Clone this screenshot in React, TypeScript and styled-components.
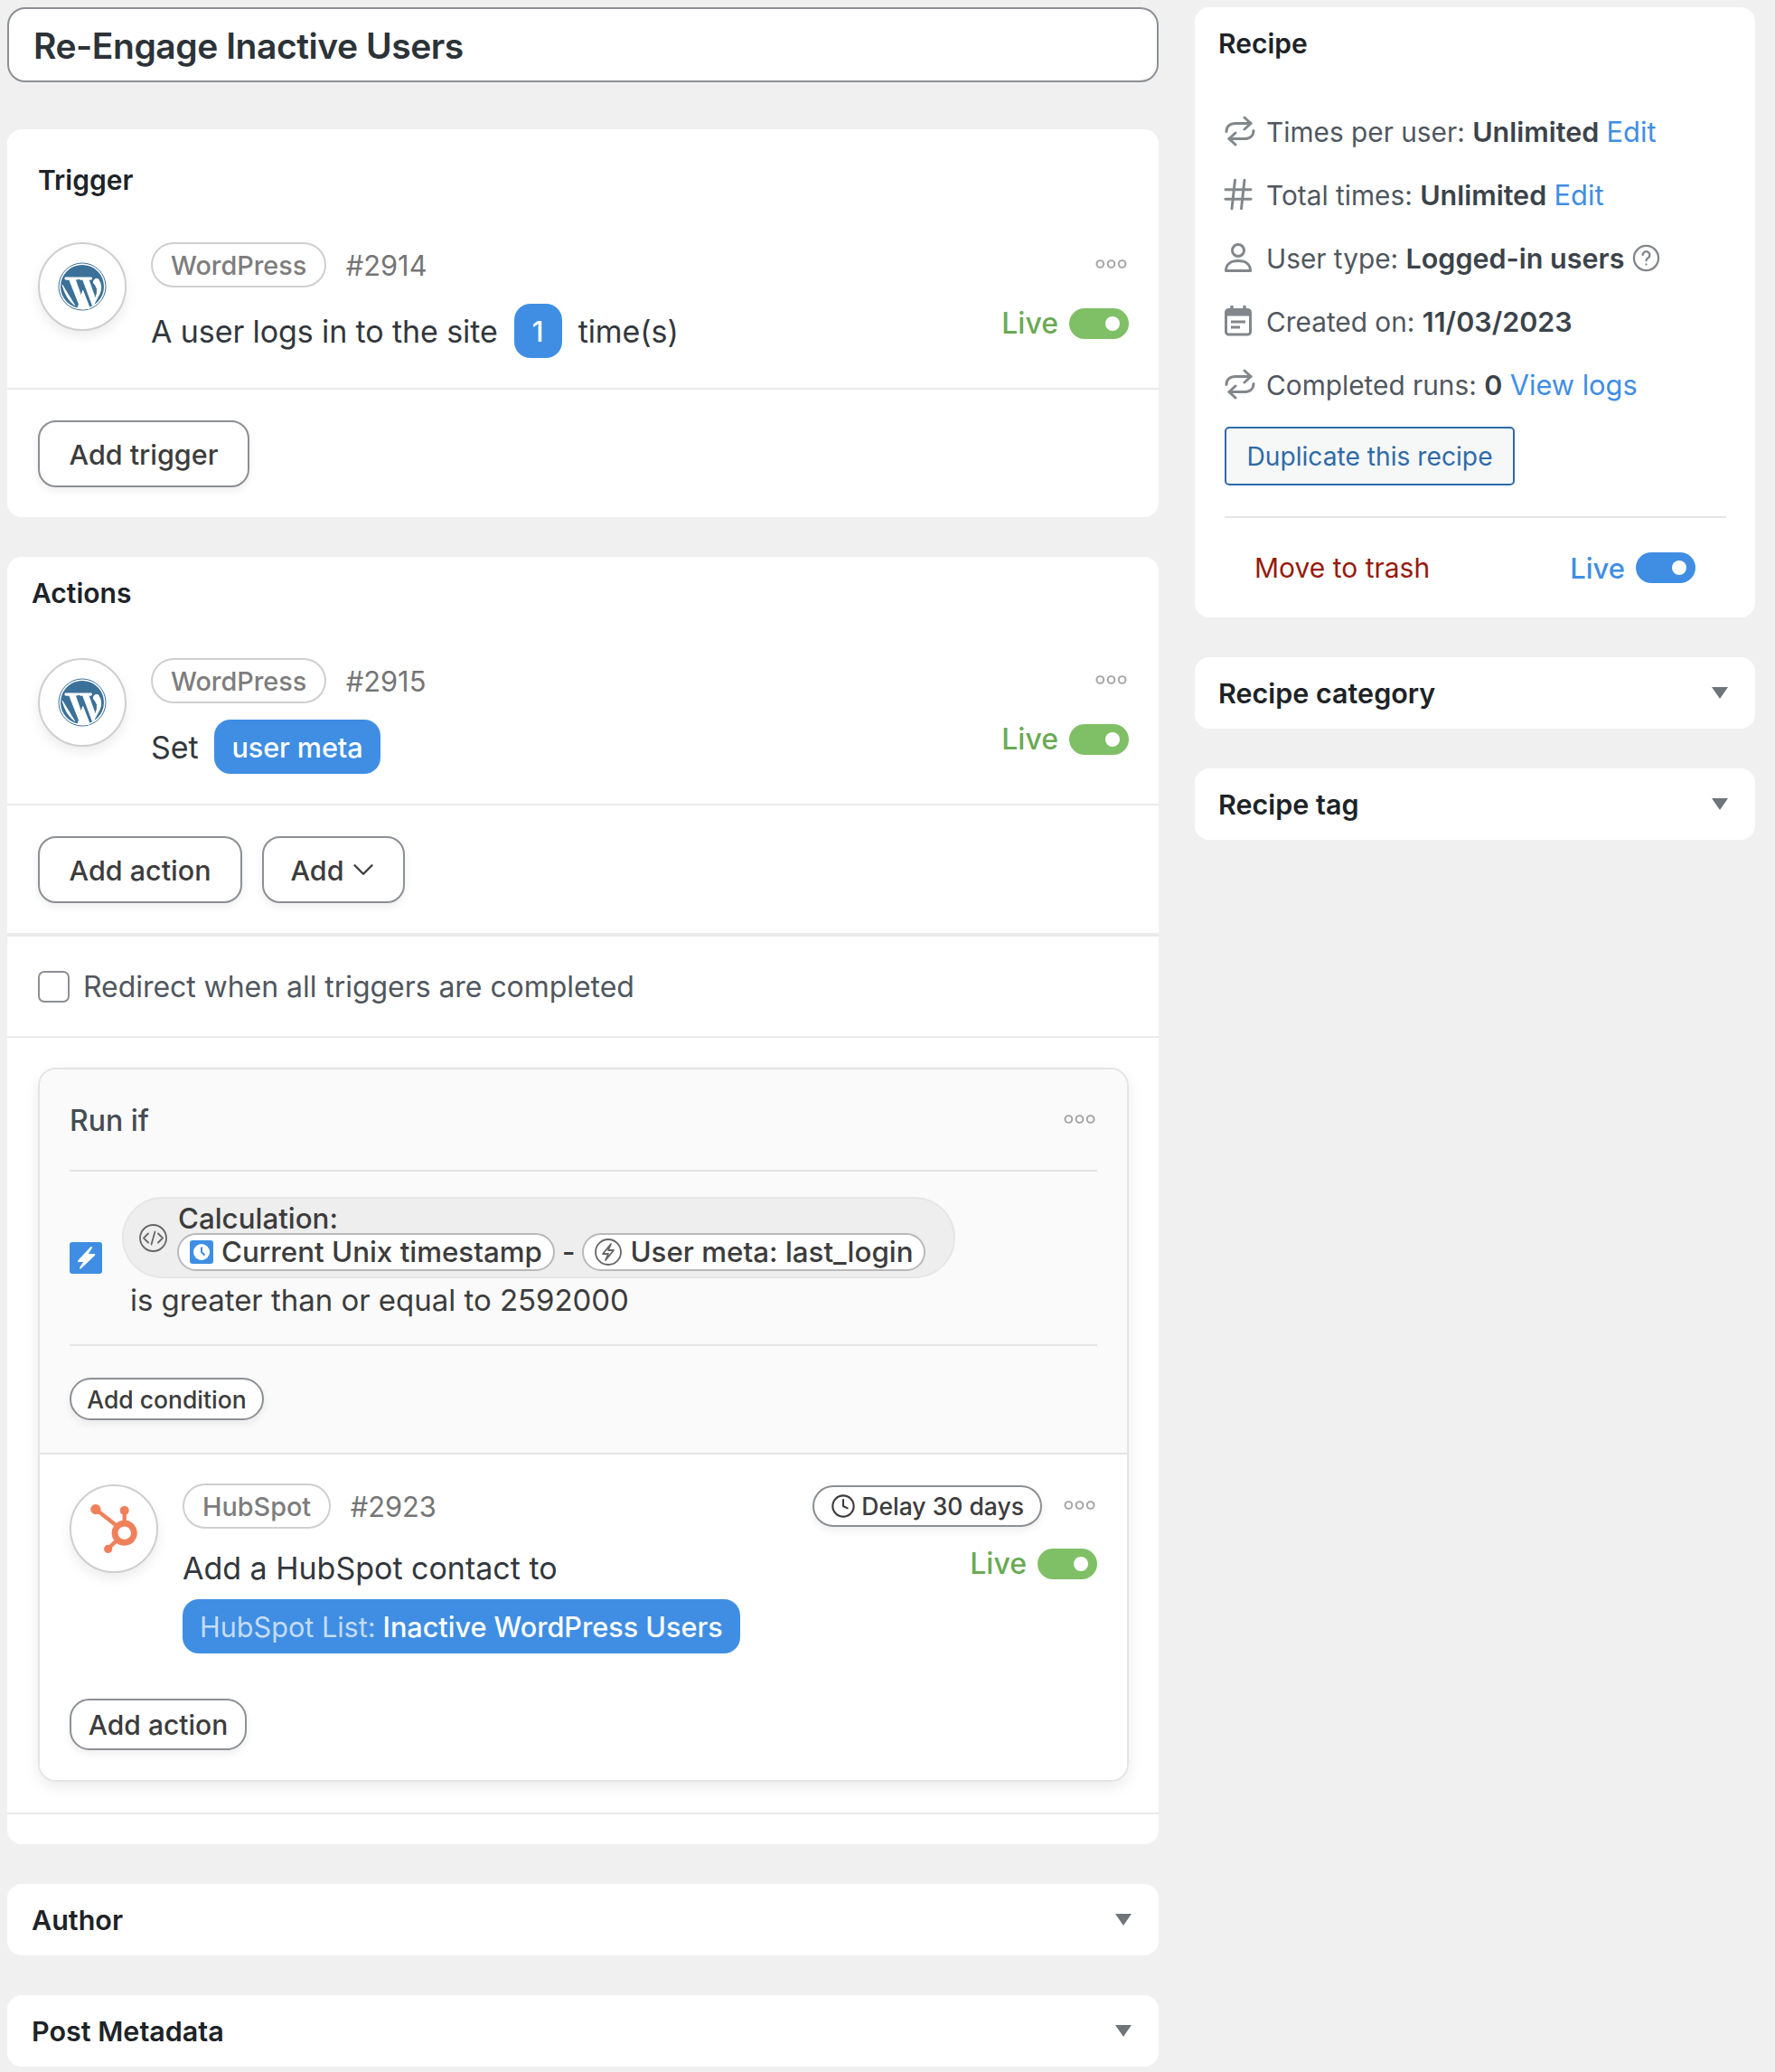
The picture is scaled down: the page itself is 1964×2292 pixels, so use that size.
import React from "react";
import styled, { createGlobalStyle } from "styled-components";
import { SiHubspot } from "react-icons/si";
import { Clock, Hash, ChevronDown } from "lucide-react";

const Global = createGlobalStyle`
  html, body { margin: 0; padding: 0; background: #f0f0f0; }
  body { font-family: Inter, "Noto Sans", sans-serif; color: #3c434a; }
  * { box-sizing: border-box; }
`;

const Page = styled.div`
  display: grid;
  grid-template-columns: 1274px 620px;
  column-gap: 40px;
  align-items: start;
  padding: 8px;
  width: 1964px;
  min-height: 2292px;
`;
const Column = styled.div`
  display: flex;
  flex-direction: column;
`;
const TitleBox = styled.div`
  height: 83px;
  margin-bottom: 52px;
  display: flex;
  align-items: center;
  padding: 2px 27px 0;
  background: #fff;
  border: 2px solid #8c8f94;
  border-radius: 20px;
  font-size: 39px;
  font-weight: 600;
  letter-spacing: -0.45px;
  color: #2c3338;
`;
const Card = styled.section<{ $gap?: number }>`
  background: #fff;
  border-radius: 16px;
  margin-bottom: ${(p) => p.$gap ?? 44}px;
`;
const CardTitle = styled.h2<{ $top: number; $left: number; $bottom: number }>`
  margin: 0;
  padding: ${(p) => p.$top}px 0 ${(p) => p.$bottom}px ${(p) => p.$left}px;
  font-size: 30px;
  line-height: 36px;
  font-weight: 600;
  color: #1d2327;
`;
const Item = styled.div<{ $pad?: string }>`
  display: flex;
  gap: 27px;
  padding: ${(p) => p.$pad ?? "0 33px 33px 34px"};
`;
const IconCircle = styled.div`
  flex: none;
  width: 98px;
  height: 98px;
  border-radius: 50%;
  background: #fff;
  border: 2px solid #cfcfcf;
  box-shadow: 0 6px 14px rgba(0, 0, 0, 0.08);
  display: flex;
  align-items: center;
  justify-content: center;
`;
const ItemMain = styled.div`
  flex: 1;
  min-width: 0;
`;
const ItemTop = styled.div`
  display: flex;
  align-items: center;
  height: 50px;
  margin-bottom: 18px;
`;
const Integration = styled.span`
  display: inline-flex;
  align-items: center;
  height: 50px;
  padding: 0 20px;
  border: 2px solid #cfcfcf;
  border-radius: 25px;
  font-size: 28.8px;
  font-weight: 500;
  color: #7d7d7d;
`;
const ItemId = styled.span`
  margin-left: 21.5px;
  font-size: 30.8px;
  color: #757575;
`;
const Spacer = styled.div`
  flex: 1;
`;
const Dots = styled.svg`
  flex: none;
  width: 35px;
  height: 12px;
  margin: -3px 2px 0 0;
`;
const ItemBottom = styled.div`
  display: flex;
  justify-content: space-between;
  align-items: flex-start;
`;
const Sentence = styled.div`
  display: flex;
  align-items: center;
  gap: 18px;
  min-height: 60px;
  font-size: 34px;
  letter-spacing: -0.1px;
  color: #32373c;
`;
const Token = styled.span`
  display: inline-flex;
  align-items: center;
  justify-content: center;
  min-width: 53px;
  height: 60px;
  padding: 0 19px;
  border-radius: 18px;
  background: #3f8ee3;
  color: #fff;
  font-size: 30.6px;
  font-weight: 500;
`;
const TokenLabel = styled.span`
  color: #c4dcf7;
  margin-right: 8px;
  font-weight: 400;
`;
const LiveWrap = styled.div<{ $top?: number }>`
  display: flex;
  align-items: center;
  gap: 12px;
  margin-top: ${(p) => p.$top ?? 2}px;
`;
const LiveText = styled.span<{ $color: string; $size: number }>`
  font-size: ${(p) => p.$size}px;
  font-weight: 500;
  color: ${(p) => p.$color};
`;
const Toggle = styled.span<{ $color: string }>`
  width: 66px;
  height: 34px;
  border-radius: 17px;
  background: ${(p) => p.$color};
  display: flex;
  align-items: center;
  justify-content: flex-end;
  padding-right: 10px;
  &::after {
    content: "";
    width: 16px;
    height: 16px;
    border-radius: 50%;
    background: #fff;
  }
`;
const Footer = styled.div`
  display: flex;
  gap: 22px;
  align-items: flex-start;
  padding: 34px 34px 33px;
  border-top: 2px solid #eaeaea;
`;
const OutlineButton = styled.button<{ $h: number; $w: number; $size: number; $r: number }>`
  display: inline-flex;
  align-items: center;
  justify-content: center;
  gap: 6px;
  width: ${(p) => p.$w}px;
  height: ${(p) => p.$h}px;
  padding: 0;
  background: #fff;
  border: 2px solid #8c8f94;
  border-radius: ${(p) => p.$r}px;
  font-family: inherit;
  font-size: ${(p) => p.$size}px;
  font-weight: 500;
  color: #3c3c3c;
  box-shadow: 0 4px 10px rgba(0, 0, 0, 0.07);
`;
const Chevron = styled(ChevronDown)`
  margin: 0 -4px;
`;
const RedirectRow = styled.label`
  display: flex;
  align-items: center;
  gap: 15px;
  height: 116px;
  padding: 0 34px;
  border-top: 4px solid #eaeaea;
  border-bottom: 2px solid #eaeaea;
  font-size: 32px;
  letter-spacing: -0.05px;
  color: #50575e;
`;
const CheckBox = styled.span`
  width: 35px;
  height: 35px;
  background: #fff;
  border: 2px solid #8c8f94;
  border-radius: 7px;
`;
const RunWrap = styled.div`
  padding: 33px 33px 34px 34px;
  border-bottom: 2px solid #eaeaea;
  margin-bottom: 33px;
`;
const RunBox = styled.div`
  border: 2px solid #e4e4e4;
  border-radius: 20px;
  overflow: hidden;
  box-shadow: 0 6px 16px rgba(0, 0, 0, 0.08);
`;
const RunTop = styled.div`
  background: #fafafa;
  padding: 0 33px;
  border-bottom: 2px solid #e4e4e4;
  height: 426px;
`;
const RunHead = styled.div`
  display: flex;
  align-items: center;
  justify-content: space-between;
  height: 113px;
  padding-top: 2px;
  border-bottom: 2px solid #e4e4e4;
  font-size: 32px;
  font-weight: 500;
  color: #444b52;
`;
const CondBlock = styled.div`
  display: flex;
  align-items: center;
  gap: 22px;
  height: 193px;
  padding-bottom: 2px;
  border-bottom: 2px solid #e4e4e4;
`;
const BoltBox = styled.svg`
  flex: none;
  width: 36px;
  height: 35px;
  margin-top: 2px;
`;
const CondBody = styled.div`
  display: flex;
  flex-direction: column;
`;
const CalcPill = styled.div`
  display: flex;
  align-items: center;
  gap: 12px;
  width: 922px;
  height: 90px;
  padding: 0 0 0 17px;
  background: #eeeeee;
  border: 2px solid #e6e6e6;
  border-radius: 45px;
`;
const CalcBody = styled.div`
  display: flex;
  flex-direction: column;
  font-size: 31.3px;
  font-weight: 500;
  color: #3c3c3c;
`;
const CalcLabel = styled.div`
  line-height: 30px;
  height: 31px;
  margin-top: 1px;
`;
const CalcLine = styled.div`
  display: flex;
  align-items: center;
  gap: 8px;
  margin-left: -1px;
`;
const Chip = styled.span`
  display: inline-flex;
  align-items: center;
  gap: 9px;
  height: 42px;
  padding: 0 12px;
  background: #fff;
  border: 2px solid #b9b9b9;
  border-radius: 21px;
  white-space: nowrap;
`;
const ChipIcon = styled.svg`
  flex: none;
`;
const CondText = styled.div`
  margin: 5px 0 0 9px;
  font-size: 33px;
  line-height: 38px;
  letter-spacing: -0.03px;
  color: #3c3c3c;
`;
const AddRow = styled.div<{ $top: number }>`
  padding-top: ${(p) => p.$top}px;
`;
const HubArea = styled.div`
  background: #fff;
  padding: 33px 33px 34px;
  height: 360px;
`;
const HubTop = styled.div`
  display: flex;
  align-items: center;
  height: 48px;
  margin-bottom: 20px;
`;
const DelayChip = styled.span`
  display: inline-flex;
  align-items: center;
  gap: 6px;
  height: 46px;
  padding: 0 18px;
  margin: 0 24px 0 0;
  background: #fff;
  border: 2px solid #8c8f94;
  border-radius: 23px;
  font-size: 26.5px;
  font-weight: 500;
  color: #3c3c3c;
  box-shadow: 0 4px 10px rgba(0, 0, 0, 0.07);
`;
const HubBody = styled.div`
  display: flex;
  flex-direction: column;
  align-items: flex-start;
  gap: 9px;
`;
const HubText = styled.div`
  font-size: 34px;
  line-height: 50px;
  letter-spacing: -0.01px;
  color: #32373c;
`;
const AccordionHead = styled.div<{ $left: number; $caret: number }>`
  display: flex;
  align-items: center;
  justify-content: space-between;
  height: 79px;
  padding: 0 ${(p) => p.$caret}px 0 ${(p) => p.$left}px;
  font-size: 30.5px;
  font-weight: 600;
  color: #1d2327;
`;
const Caret = styled.span`
  width: 0;
  height: 0;
  border-left: 9px solid transparent;
  border-right: 9px solid transparent;
  border-top: 13px solid #6f757b;
`;
const SideBody = styled.div`
  padding: 0 32px 0 33px;
`;
const SideRow = styled.div`
  display: flex;
  align-items: center;
  height: 70px;
`;
const SideText = styled.span`
  font-size: 29.8px;
  color: #50575e;
  white-space: pre;
`;
const SideIcon = styled.span`
  flex: none;
  width: 46px;
  display: flex;
  align-items: center;
`;
const HashIcon = styled(Hash)`
  margin: -5px 0 -5px -6px;
`;
const Strong = styled.strong`
  font-size: 30.5px;
  font-weight: 600;
  color: #3c434a;
`;
const Link = styled.span`
  font-size: 30.8px;
  color: #3f8ee3;
`;
const HelpIcon = styled.svg`
  margin-left: 9px;
`;
const DupButton = styled.button`
  display: block;
  width: 321px;
  height: 65px;
  margin-top: 12px;
  padding: 0;
  background: #f6f7f7;
  border: 2px solid #2f6aa8;
  border-radius: 5px;
  font-family: inherit;
  font-size: 28.2px;
  color: #2f6aa8;
`;
const SideFooter = styled.div`
  display: flex;
  align-items: center;
  justify-content: space-between;
  margin-top: 34px;
  padding: 0 34px 0 33px;
  height: 112px;
  border-top: 2px solid #e6e6e6;
`;
const Trash = styled.span`
  font-size: 30px;
  color: #971a0c;
`;

const WpLogo = () => (
  <svg width="62" height="62" viewBox="0 0 186 186" fill="#fff" stroke="#fff" strokeWidth="3" strokeLinejoin="round">
    <circle cx="93" cy="93" r="78" fill="none" stroke="#3b7199" strokeWidth="3" />
    <circle cx="93" cy="93" r="72" fill="#3b7199" stroke="none" />
    <path d="M36 63H80V68L70 70L93 135L85 158L50 70L36 69Z" />
    <path d="M27 88L68 155Q40 135 27 88Z" />
    <path d="M80 63H124V69L114 70L137 135L128 158L95 70L84 69Z" />
    <path d="M130 78Q132 64 146 68Q162 92 150 118L130 155L142 115Q146 100 136 88Q130 82 130 78Z" />
    <path d="M95 106L118 165Q100 170 78 165Z" />
  </svg>
);
const DotsIcon = () => (
  <Dots viewBox="0 0 36 12" fill="none" stroke="#a3a3a3" strokeWidth="2">
    <circle cx="5.5" cy="6" r="4" />
    <circle cx="18" cy="6" r="4" />
    <circle cx="30.5" cy="6" r="4" />
  </Dots>
);
const Live = ({ top }: { top?: number }) => (
  <LiveWrap $top={top}>
    <LiveText $color="#6aaa54" $size={32}>Live</LiveText>
    <Toggle $color="#7fc066" />
  </LiveWrap>
);
const RepeatIcon = () => (
  <svg width="34" height="34" viewBox="0 0 34 34" fill="none" stroke="#82878c" strokeWidth="3" strokeLinecap="round" strokeLinejoin="round">
    <path d="M22 2l7 6.5-7 6.5" />
    <path d="M29 8.5H12C6 8.5 2 12 2 17.5" />
    <path d="M12 32l-7-6.5 7-6.5" />
    <path d="M5 25.5h17c6 0 10-3.5 10-9" />
  </svg>
);
const UserIcon = () => (
  <svg width="30" height="34" viewBox="0 0 30 34" fill="none" stroke="#82878c" strokeWidth="3" strokeLinejoin="round">
    <circle cx="15" cy="9" r="6.5" />
    <path d="M1.5 31.5c0-7 5-11 13.5-11s13.5 4 13.5 11z" />
  </svg>
);
const CalendarIcon = () => (
  <svg width="30" height="34" viewBox="0 0 30 34" fill="none">
    <path d="M8 1v6M22 1v6" stroke="#82878c" strokeWidth="3.4" strokeLinecap="round" />
    <rect x="1.5" y="4.5" width="27" height="27.5" rx="3" stroke="#82878c" strokeWidth="3" />
    <rect x="1.5" y="4.5" width="27" height="7" fill="#82878c" />
    <path d="M7 18h16M7 24h10" stroke="#82878c" strokeWidth="3" />
  </svg>
);
const CodeIcon = () => (
  <svg width="31" height="31" viewBox="0 0 31 31" fill="none" stroke="#666" strokeWidth="1.8" strokeLinecap="round" strokeLinejoin="round">
    <circle cx="15.5" cy="15.5" r="14.5" />
    <path d="M10 10.5l-5 5 5 5M21 10.5l5 5-5 5M17.5 8.5l-4 14" />
  </svg>
);

export default function App() {
  return (
    <>
      <Global />
      <Page>
        <Column>
          <TitleBox>Re-Engage Inactive Users</TitleBox>

          <Card>
            <CardTitle $top={38} $left={34} $bottom={51}>Trigger</CardTitle>
            <Item>
              <IconCircle><WpLogo /></IconCircle>
              <ItemMain>
                <ItemTop>
                  <Integration>WordPress</Integration>
                  <ItemId>#2914</ItemId>
                  <Spacer />
                  <DotsIcon />
                </ItemTop>
                <ItemBottom>
                  <Sentence>
                    A user logs in to the site <Token>1</Token> time(s)
                  </Sentence>
                  <Live />
                </ItemBottom>
              </ItemMain>
            </Item>
            <Footer>
              <OutlineButton $w={234} $h={74} $size={30.5} $r={20}>Add trigger</OutlineButton>
            </Footer>
          </Card>

          <Card $gap={44}>
            <CardTitle $top={22} $left={27} $bottom={54}>Actions</CardTitle>
            <Item>
              <IconCircle><WpLogo /></IconCircle>
              <ItemMain>
                <ItemTop>
                  <Integration>WordPress</Integration>
                  <ItemId>#2915</ItemId>
                  <Spacer />
                  <DotsIcon />
                </ItemTop>
                <ItemBottom>
                  <Sentence>
                    Set <Token>user meta</Token>
                  </Sentence>
                  <Live />
                </ItemBottom>
              </ItemMain>
            </Item>
            <Footer>
              <OutlineButton $w={226} $h={74} $size={30.5} $r={20}>Add action</OutlineButton>
              <OutlineButton $w={158} $h={74} $size={30.5} $r={20}>Add <Chevron size={38} strokeWidth={1.5} /></OutlineButton>
            </Footer>
            <RedirectRow><CheckBox />Redirect when all triggers are completed</RedirectRow>
            <RunWrap>
              <RunBox>
                <RunTop>
                  <RunHead>Run if<DotsIcon /></RunHead>
                  <CondBlock>
                    <BoltBox viewBox="0 0 36 35">
                      <rect width="36" height="35" rx="3" fill="#3f8ee3" />
                      <path d="M24 6L10 21h7l-5 7.5L27.3 14H19z" fill="#fff" stroke="#fff" strokeWidth="2" strokeLinejoin="round" />
                    </BoltBox>
                    <CondBody>
                      <CalcPill>
                        <CodeIcon />
                        <CalcBody>
                          <CalcLabel>Calculation:</CalcLabel>
                          <CalcLine>
                            <Chip>
                              <ChipIcon width="26" height="26" viewBox="0 0 26 26">
                                <rect width="26" height="26" rx="3" fill="#3f8ee3" />
                                <circle cx="13" cy="13" r="9" fill="#fff" />
                                <path d="M13 7.5V13l3.5 3.5" fill="none" stroke="#3f8ee3" strokeWidth="2" />
                              </ChipIcon>
                              Current Unix timestamp
                            </Chip>
                            -
                            <Chip>
                              <ChipIcon width="30" height="30" viewBox="0 0 30 30" fill="none" stroke="#666" strokeWidth="1.8" strokeLinejoin="round">
                                <circle cx="15" cy="15" r="14" />
                                <path d="M18 6L9 17h6l-3 7 9-11h-6z" />
                              </ChipIcon>
                              User meta: last_login
                            </Chip>
                          </CalcLine>
                        </CalcBody>
                      </CalcPill>
                      <CondText>is greater than or equal to 2592000</CondText>
                    </CondBody>
                  </CondBlock>
                  <AddRow $top={35}>
                    <OutlineButton $w={215} $h={47} $size={26.5} $r={24}>Add condition</OutlineButton>
                  </AddRow>
                </RunTop>
                <HubArea>
                  <Item $pad="0">
                    <IconCircle><SiHubspot size={54} color="#f0805a" /></IconCircle>
                    <ItemMain>
                      <HubTop>
                        <Integration>HubSpot</Integration>
                        <ItemId>#2923</ItemId>
                        <Spacer />
                        <DelayChip><Clock size={28} color="#3c3c3c" strokeWidth={1.8} />Delay 30 days</DelayChip>
                        <DotsIcon />
                      </HubTop>
                      <ItemBottom>
                        <HubBody>
                          <HubText>Add a HubSpot contact to</HubText>
                          <Token><TokenLabel>HubSpot List:</TokenLabel>Inactive WordPress Users</Token>
                        </HubBody>
                        <Live top={0} />
                      </ItemBottom>
                    </ItemMain>
                  </Item>
                  <AddRow $top={50}>
                    <OutlineButton $w={196} $h={57} $size={30} $r={22}>Add action</OutlineButton>
                  </AddRow>
                </HubArea>
              </RunBox>
            </RunWrap>
          </Card>

          <Card>
            <AccordionHead $left={27} $caret={30}>Author<Caret /></AccordionHead>
          </Card>
          <Card $gap={0}>
            <AccordionHead $left={27} $caret={30}>Post Metadata<Caret /></AccordionHead>
          </Card>
        </Column>

        <Column>
          <Card>
            <CardTitle $top={22} $left={26} $bottom={44}>Recipe</CardTitle>
            <SideBody>
              <SideRow><SideIcon><RepeatIcon /></SideIcon><SideText>Times per user: <Strong>Unlimited</Strong> <Link>Edit</Link></SideText></SideRow>
              <SideRow><SideIcon><HashIcon size={42} color="#82878c" strokeWidth={1.7} /></SideIcon><SideText>Total times: <Strong>Unlimited</Strong> <Link>Edit</Link></SideText></SideRow>
              <SideRow>
                <SideIcon><UserIcon /></SideIcon><SideText>User type: <Strong>Logged-in users</Strong></SideText>
                <HelpIcon width="31" height="31" viewBox="0 0 24 24" fill="none" stroke="#82878c" strokeWidth="1.8" strokeLinecap="round">
                  <circle cx="12" cy="12" r="10.5" />
                  <path d="M9 9.3a3 3 0 1 1 4.6 2.6c-1 .6-1.6 1.2-1.6 2.3" />
                  <path d="M12 17.4v.1" />
                </HelpIcon>
              </SideRow>
              <SideRow><SideIcon><CalendarIcon /></SideIcon><SideText>Created on: <Strong>11/03/2023</Strong></SideText></SideRow>
              <SideRow><SideIcon><RepeatIcon /></SideIcon><SideText>Completed runs: <Strong>0</Strong> <Link>View logs</Link></SideText></SideRow>
              <DupButton>Duplicate this recipe</DupButton>
              <SideFooter>
                <Trash>Move to trash</Trash>
                <LiveWrap $top={0}>
                  <LiveText $color="#3f8ee3" $size={31}>Live</LiveText>
                  <Toggle $color="#3f8ee3" />
                </LiveWrap>
              </SideFooter>
            </SideBody>
          </Card>
          <Card>
            <AccordionHead $left={26} $caret={30}>Recipe category<Caret /></AccordionHead>
          </Card>
          <Card>
            <AccordionHead $left={26} $caret={30}>Recipe tag<Caret /></AccordionHead>
          </Card>
        </Column>
      </Page>
    </>
  );
}
